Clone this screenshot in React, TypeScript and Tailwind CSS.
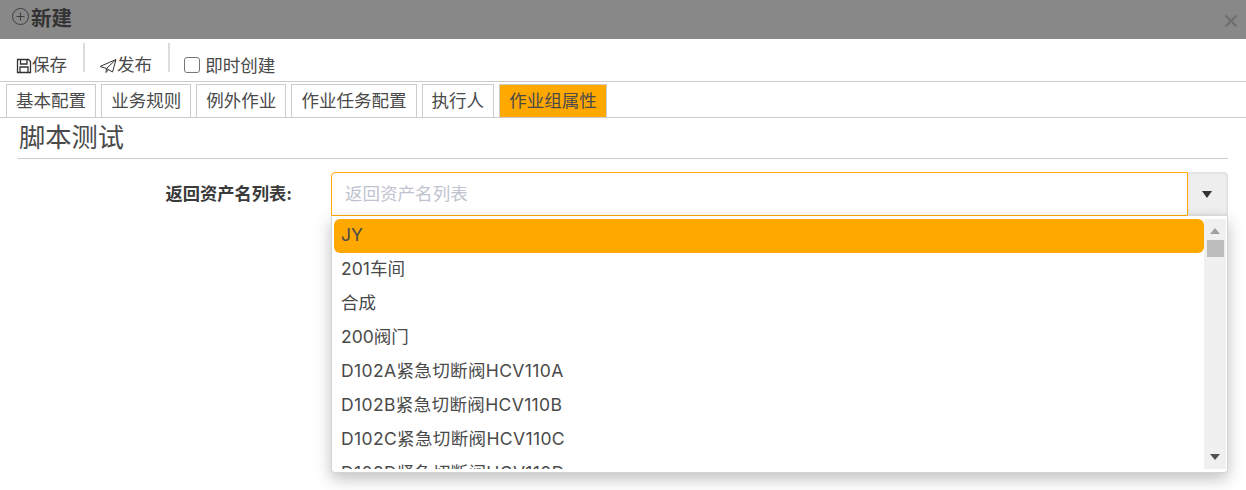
import React from "react";

const tabs = ["基本配置", "业务规则", "例外作业", "作业任务配置", "执行人", "作业组属性"];
const options = [
    "JY",
    "201车间",
    "合成",
    "200阀门",
    "D102A紧急切断阀HCV110A",
    "D102B紧急切断阀HCV110B",
    "D102C紧急切断阀HCV110C",
    "D102D紧急切断阀HCV110D",
];

export default function App() {
    return (
        <div className="w-[1246px] h-[490px] overflow-hidden bg-white text-[#4a4a4a] text-[17.55px] font-['Inter','Noto_Sans_CJK_SC',sans-serif]">
            <header className="h-[39px] bg-[#888888] flex items-center justify-between pl-[11px] pr-[8px]">
                <div className="flex items-center text-[#333] text-[20.5px] font-bold leading-none">
                    <svg width="20" height="19" viewBox="0 0 20 19" fill="none" stroke="#3d3d3d" strokeWidth="1" className="mb-[7px]">
                        <circle cx="9.5" cy="9.5" r="8" />
                        <path d="M9.5 5.5v8M5.5 9.5h8" />
                    </svg>
                    <span>新建</span>
                </div>
                <svg width="14" height="14" viewBox="0 0 14 14" stroke="#6f6f6f" strokeWidth="2.4" className="mt-[3px]">
                    <path d="M1.5 1.5l11 11M12.5 1.5l-11 11" />
                </svg>
            </header>

            <div className="h-[43px] border-b border-[#cccccc] flex items-center pl-4">
                <button className="flex items-center h-8 mt-[11px]">
                    <svg width="16" height="16" viewBox="0 0 16 16" fill="none" stroke="#333" strokeWidth="1.3">
                        <path d="M1.5 1.5h11l2 2v11h-13z" />
                        <path d="M4.5 1.5v4.5h6.5v-4.5M4 14.5v-5.5h8v5.5" />
                    </svg>
                    <span>保存</span>
                </button>
                <div className="w-[2px] h-[29px] bg-[#dddddd] ml-4 -mt-[5px]" />
                <button className="flex items-center h-8 mt-[11px] ml-[14px]">
                    <svg width="18" height="16" viewBox="0 0 18 16" fill="none" stroke="#333" strokeWidth="1">
                        <path d="M1 8.5L17 1.5L13.5 14L7.5 10.5L1 8.5zM7.5 10.5L7 14.5L9.5 11.7M7.5 10.5L17 1.5" />
                    </svg>
                    <span>发布</span>
                </button>
                <div className="w-[2px] h-[29px] bg-[#dddddd] ml-4 -mt-[5px]" />
                <label className="flex items-center mt-[13px] ml-[14px]">
                    <span className="w-4 h-4 border border-[#767676] rounded-[3px] bg-white -mt-[3px]" />
                    <span className="ml-[5px]">即时创建</span>
                </label>
            </div>

            <div className="h-[36px] border-b border-[#cccccc] flex items-end pl-[6px] gap-[5px]">
                {tabs.map((tab, i) => (
                    <div
                        key={tab}
                        className={`h-[33px] px-[9px] flex items-center border border-b-0 border-[#cccccc] whitespace-nowrap ${i === 5 ? "bg-[#ffa800]" : "bg-white"}`}
                    >
                        {tab}
                    </div>
                ))}
            </div>

            <div className="mx-[18px] h-[41px] border-b border-[#cccccc] pl-px flex items-center text-[26.25px] text-[#4a4a4a]">脚本测试</div>

            <div className="relative mt-[13px] flex h-11">
                <label className="w-[293px] pr-px text-right font-bold text-[17.25px] leading-[44px] text-[#3a3a3a]">返回资产名列表:</label>
                <div className="ml-[38px] flex w-[897px]">
                    <div className="w-[857px] border border-[#ffa800] rounded-tl-[4px] flex items-center pl-[13px] text-[#bfc3cf]">
                        返回资产名列表
                    </div>
                    <div className="w-[40px] bg-[#eeeeee] rounded-tr-[4px] border-t border-r border-b border-[#e2e2e2] flex items-center justify-center pr-[2px] shadow-[inset_0_0_3px_rgba(0,0,0,0.08)]">
                        <svg width="10" height="7" viewBox="0 0 10 7" fill="#333">
                            <path d="M0 0h10L5 7z" />
                        </svg>
                    </div>
                </div>

                <div className="absolute left-[331px] top-11 w-[897px] h-[257px] bg-white border border-t-0 border-[#d4d4d4] rounded-b-[4px] shadow-[0_6px_16px_rgba(0,0,0,0.25)] flex pl-[2px] pr-px pt-[3px] pb-[3px]">
                    <ul className="flex-1 h-[250px] overflow-hidden">
                        {options.map((opt, i) => (
                            <li
                                key={opt}
                                className={`h-[34px] pl-[7px] leading-[32px] rounded-[6px] whitespace-nowrap ${i === 0 ? "bg-[#ffa800]" : ""} ${i >= 4 ? "tracking-[0.35px]" : ""}`}
                            >
                                {opt}
                            </li>
                        ))}
                    </ul>
                    <div className="w-[22px] h-[250px] bg-[#f0f0f0] flex flex-col items-center">
                        <svg width="10" height="6" viewBox="0 0 10 6" fill="#a0a0a0" className="mt-[9px]">
                            <path d="M5 0l5 6H0z" />
                        </svg>
                        <div className="w-[17px] h-[17px] bg-[#bcbcbc] mt-[6px]" />
                        <svg width="10" height="6" viewBox="0 0 10 6" fill="#505050" className="mt-auto mb-[9px]">
                            <path d="M0 0h10L5 6z" />
                        </svg>
                    </div>
                </div>
            </div>
        </div>
    );
}
